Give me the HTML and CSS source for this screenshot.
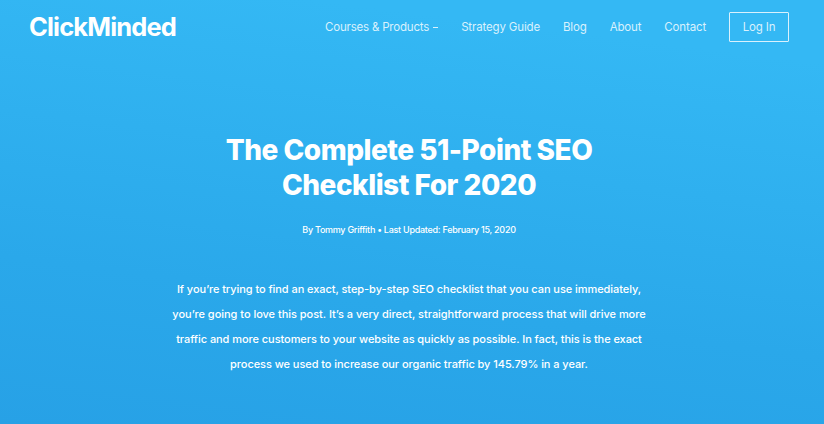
FILE: index.html
```html
<!DOCTYPE html>
<html lang="en">
<head>
  <meta charset="UTF-8">
  <meta name="viewport" content="width=device-width, initial-scale=1.0">
  <title>ClickMinded</title>
  <link rel="stylesheet" href="styles.css">
</head>
<body>
  <header class="site-header">
    <a class="logo" href="#">ClickMinded</a>
    <nav class="main-nav">
      <a class="courses" href="#">Courses &amp; Products <span class="caret"></span></a>
      <a class="guide" href="#">Strategy Guide</a>
      <a class="blog" href="#">Blog</a>
      <a class="about" href="#">About</a>
      <a class="contact" href="#">Contact</a>
      <a class="login" href="#">Log In</a>
    </nav>
  </header>

  <main class="hero">
    <h1>The Complete 51-Point SEO<br>Checklist For 2020</h1>
    <p class="meta">By Tommy Griffith • Last Updated: February 15, 2020</p>
    <p class="intro">
      If you’re trying to find an exact, step-by-step SEO checklist that you can use immediately,<br>
      <span class="wide">you’re going to love this post. It’s a very direct, straightforward process that will drive more</span><br>
      traffic and more customers to your website as quickly as possible. In fact, this is the exact<br>
      process we used to increase our organic traffic by 145.79% in a year.
    </p>
  </main>
</body>
</html>
```
FILE: styles.css
```css
* {
  box-sizing: border-box;
}

body {
  margin: 0;
  min-height: 424px;
  font-family: Inter, sans-serif;
  color: #fff;
  background: linear-gradient(187deg, #34b8f4 12%, #2aa8ea 68%, #27a1e6);
}

a {
  color: #fff;
  text-decoration: none;
}

.site-header {
  display: flex;
  justify-content: space-between;
  align-items: center;
  height: 54px;
  padding: 0 35px 0 29px;
}

.logo {
  padding-bottom: 2px;
  font-size: 25.5px;
  font-weight: 700;
  letter-spacing: -0.85px;
}

.main-nav {
  display: flex;
  align-items: center;
  gap: 23px;
  font-size: 11.5px;
  letter-spacing: -0.15px;
}

.main-nav a {
  color: #d9f1fd;
}

.main-nav .courses {
  letter-spacing: -0.2px;
}

.caret {
  display: inline-block;
  width: 5px;
  height: 1px;
  margin-left: 1px;
  vertical-align: 3px;
  background: #d9f1fd;
}

.main-nav .login {
  width: 60px;
  height: 30px;
  border: 1px solid #d9f1fd;
  border-radius: 1px;
  line-height: 28px;
  text-align: center;
}

.hero {
  padding: 79px 6px 0 0;
  text-align: center;
  white-space: nowrap;
}

h1 {
  margin: 0;
  font-size: 28px;
  font-weight: 800;
  line-height: 35px;
  letter-spacing: -0.48px;
}

.meta {
  margin: 20px 0 0;
  font-size: 9px;
  font-weight: 500;
  line-height: 14px;
  letter-spacing: -0.27px;
}

.intro {
  margin: 40px 0 0;
  font-size: 11px;
  font-weight: 500;
  line-height: 25px;
  letter-spacing: -0.06px;
}

.wide {
  letter-spacing: -0.03px;
}
```
